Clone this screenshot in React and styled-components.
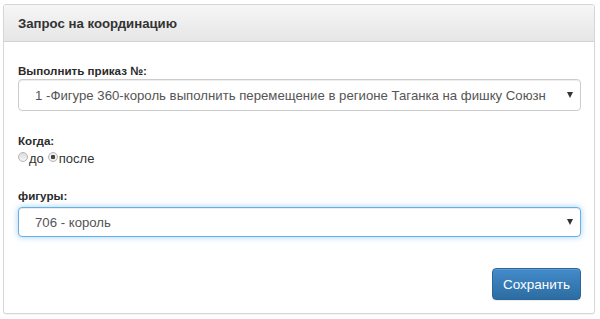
import styled, { createGlobalStyle } from "styled-components";

const GlobalStyle = createGlobalStyle`
  html, body {
    margin: 0;
    padding: 0;
    background: #fff;
    font-family: "Liberation Sans", Arial, sans-serif;
    color: #333;
  }
`;

const Page = styled.div`
  padding: 4px 5px 4px 3px;
`;

const Panel = styled.div`
  border: 1px solid #d6d6d6;
  border-radius: 3px;
  background: #fff;
  box-shadow: 0 1px 1px rgba(0, 0, 0, 0.05);
  overflow: hidden;
`;

const PanelHeading = styled.div`
  height: 36px;
  display: flex;
  align-items: center;
  padding: 0 14px;
  background: linear-gradient(to bottom, #f6f6f6 0%, #e6e6e6 100%);
  border-bottom: 1px solid #d2d2d2;
  font-size: 13.2px;
  font-weight: bold;
  color: #333;
`;

const PanelBody = styled.div`
  display: flex;
  flex-direction: column;
  padding: 21px 13px 13px 14px;
`;

const Label = styled.div`
  font-size: 11.6px;
  line-height: 16px;
  font-weight: bold;
  color: #2a2a2a;
  margin-top: ${({ $gap }) => $gap || 0}px;
`;

const Select = styled.div`
  height: ${({ $focus }) => ($focus ? 30 : 32)}px;
  box-sizing: border-box;
  margin-top: ${({ $gap }) => $gap || 0}px;
  display: flex;
  align-items: center;
  justify-content: space-between;
  padding: 0 7px 0 16px;
  border: 1px solid ${({ $focus }) => ($focus ? "#66afe9" : "#ccc")};
  border-radius: 4px;
  font-size: 13.2px;
  color: #555;
  background: #fff;
  box-shadow: ${({ $focus }) =>
    $focus
      ? "inset 0 1px 1px rgba(0,0,0,.075), 0 0 6px rgba(102,175,233,.6)"
      : "inset 0 1px 1px rgba(0,0,0,.075)"};
  white-space: nowrap;
  overflow: hidden;
`;

const Arrow = styled.span`
  width: 0;
  height: 0;
  border-left: 3px solid transparent;
  border-right: 3px solid transparent;
  border-top: 6px solid #333;
  flex: none;
`;

const RadioRow = styled.div`
  display: flex;
  align-items: center;
  height: 16px;
  margin-top: 1px;
  font-size: 13px;
  color: #333;
`;

const RadioOption = styled.label`
  display: flex;
  align-items: center;
  margin-right: 4px;
`;

const RadioDot = styled.span`
  width: 8px;
  height: 8px;
  border-radius: 50%;
  border: 1px solid #b4b4b4;
  background: ${({ $checked }) =>
    $checked
      ? "radial-gradient(circle, #444 0 2px, #eee 2.5px)"
      : "linear-gradient(#dcdcdc, #f5f5f5)"};
  margin: 0 1px 2px 0;
`;

const Footer = styled.div`
  display: flex;
  justify-content: flex-end;
  margin-top: 31px;
`;

const SaveButton = styled.button`
  width: 89px;
  height: 32px;
  border: 1px solid #2b669a;
  border-radius: 4px;
  background: linear-gradient(to bottom, #428bca 0%, #2d6ca2 100%);
  box-shadow: inset 0 1px 0 rgba(255, 255, 255, 0.15), 0 1px 1px rgba(0, 0, 0, 0.075);
  color: #fff;
  font-family: "Liberation Sans", Arial, sans-serif;
  font-size: 13.5px;
  padding: 0;
  cursor: pointer;
`;

const App = () => {
  return (
    <>
      <GlobalStyle />
      <Page>
        <Panel>
          <PanelHeading>Запрос на координацию</PanelHeading>
          <PanelBody>
            <Label>Выполнить приказ №:</Label>
            <Select>
              <span>1 -Фигуре 360-король выполнить перемещение в регионе Таганка на фишку Союзн</span>
              <Arrow />
            </Select>

            <Label $gap={22}>Когда:</Label>
            <RadioRow>
              <RadioOption>
                <RadioDot />
                до
              </RadioOption>
              <RadioOption>
                <RadioDot $checked />
                после
              </RadioOption>
            </RadioRow>

            <Label $gap={22}>фигуры:</Label>
            <Select $focus $gap={3}>
              <span>706 - король</span>
              <Arrow />
            </Select>

            <Footer>
              <SaveButton>Сохранить</SaveButton>
            </Footer>
          </PanelBody>
        </Panel>
      </Page>
    </>
  );
};

export default App;
